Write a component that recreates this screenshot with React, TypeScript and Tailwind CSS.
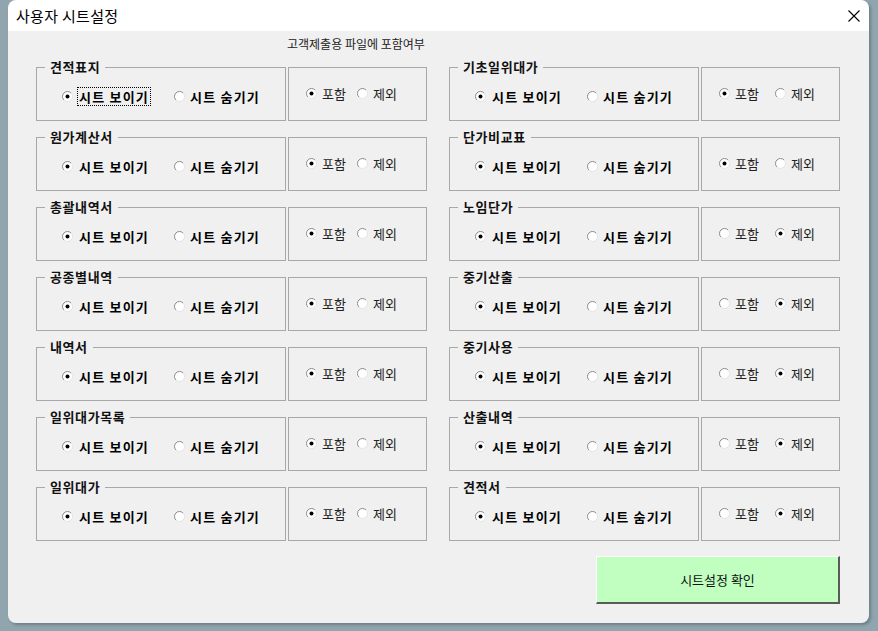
import React from 'react';

type Row = { name: string; include: boolean };

const LEFT: Row[] = [
  { name: '견적표지', include: true },
  { name: '원가계산서', include: true },
  { name: '총괄내역서', include: true },
  { name: '공종별내역', include: true },
  { name: '내역서', include: true },
  { name: '일위대가목록', include: true },
  { name: '일위대가', include: true },
];

const RIGHT: Row[] = [
  { name: '기초일위대가', include: true },
  { name: '단가비교표', include: true },
  { name: '노임단가', include: false },
  { name: '중기산출', include: false },
  { name: '중기사용', include: false },
  { name: '산출내역', include: false },
  { name: '견적서', include: false },
];

const Radio = ({ checked }: { checked: boolean }) => (
  <svg width="11" height="11" viewBox="0 0 11 11" className="shrink-0">
    <circle cx="5.5" cy="5.5" r="5" fill="#ffffff" />
    <path d="M1.96 9.04 A5 5 0 0 1 9.04 1.96" fill="none" stroke="#8a8a8a" strokeWidth="1" />
    <path d="M9.04 1.96 A5 5 0 0 1 1.96 9.04" fill="none" stroke="#e3e3e3" strokeWidth="1" />
    {checked && <circle cx="5.5" cy="5.5" r="2" fill="#000000" />}
  </svg>
);

const SheetRow = ({ row, focus, wide }: { row: Row; focus?: boolean; wide?: boolean }) => (
  <div className="flex gap-[2px]">
    {/* 시트 보이기 / 숨기기 */}
    <div className="relative w-[250px] h-[54px] border border-[#a8a8a8] flex items-center pl-[25px] pt-[4px]">
      <span className="absolute -top-[9px] left-[8px] px-[5px] bg-[#f0f0f0] text-[13px] font-semibold tracking-[0.6px] leading-[16px] text-[#111]">
        {row.name}
      </span>
      <div className="w-[112px] flex items-center gap-[5px]">
        <Radio checked />
        <span
          className={
            focus
              ? 'text-[13px] font-semibold tracking-[1.2px] leading-[17px] px-[1px] outline outline-1 outline-dotted outline-black'
              : 'text-[13px] font-semibold tracking-[1.2px] leading-[17px] px-[1px]'
          }
        >
          시트 보이기
        </span>
      </div>
      <div className="flex items-center gap-[5px]">
        <Radio checked={false} />
        <span className="text-[13px] font-semibold tracking-[1.2px] leading-[17px]">시트 숨기기</span>
      </div>
    </div>
    {/* 포함 / 제외 */}
    <div className="w-[139px] h-[54px] border border-[#a8a8a8] flex items-center pl-[17px] pb-[1px]">
      <div className={wide ? 'w-[56px] flex items-center gap-[5px]' : 'w-[51px] flex items-center gap-[5px]'}>
        <Radio checked={row.include} />
        <span className="text-[13px] leading-[16px] text-[#222]">포함</span>
      </div>
      <div className="flex items-center gap-[5px]">
        <Radio checked={!row.include} />
        <span className="text-[13px] leading-[16px] text-[#222]">제외</span>
      </div>
    </div>
  </div>
);

export default function App() {
  return (
    <div className="w-[878px] h-[631px] bg-[#91a5af] font-['Noto_Sans_CJK_KR',sans-serif] text-black overflow-hidden">
      <div className="ml-[8px] w-[861px] h-[623px] rounded-[8px] overflow-hidden flex flex-col shadow-[2px_2px_3px_rgba(40,60,70,0.35)]">
        {/* title bar */}
        <div className="h-[31px] bg-white flex items-center justify-between pl-[8px] pr-[8px]">
          <span className="text-[15px] tracking-[0.3px] leading-[20px] pt-[1px]">사용자 시트설정</span>
          <svg width="12" height="12" viewBox="0 0 12 12" className="mr-[1px]">
            <path d="M0.5 0.5 L11.5 11.5 M11.5 0.5 L0.5 11.5" stroke="#000" strokeWidth="1.1" />
          </svg>
        </div>
        {/* body */}
        <div className="flex-1 bg-[#f0f0f0] px-[28px]">
          <div className="h-[36px] pl-[251px] pt-[5px] text-[12px] leading-[16px] text-[#222]">
            고객제출용 파일에 포함여부
          </div>
          <div className="grid grid-cols-[391px_391px] gap-x-[22px] gap-y-[16px]">
            {LEFT.map((row, i) => (
              <React.Fragment key={row.name}>
                <SheetRow row={row} focus={i === 0} />
                <SheetRow row={RIGHT[i]} wide />
              </React.Fragment>
            ))}
          </div>
          <div className="flex justify-end mt-[15px] pr-[1px]">
            <button className="w-[244px] h-[48px] bg-[#c0ffc0] border-t border-l border-t-white border-l-white border-b-2 border-r-2 border-b-[#5a5a5a] border-r-[#5a5a5a] text-[13px] leading-[18px] text-[#111]">
              시트설정 확인
            </button>
          </div>
        </div>
      </div>
    </div>
  );
}
